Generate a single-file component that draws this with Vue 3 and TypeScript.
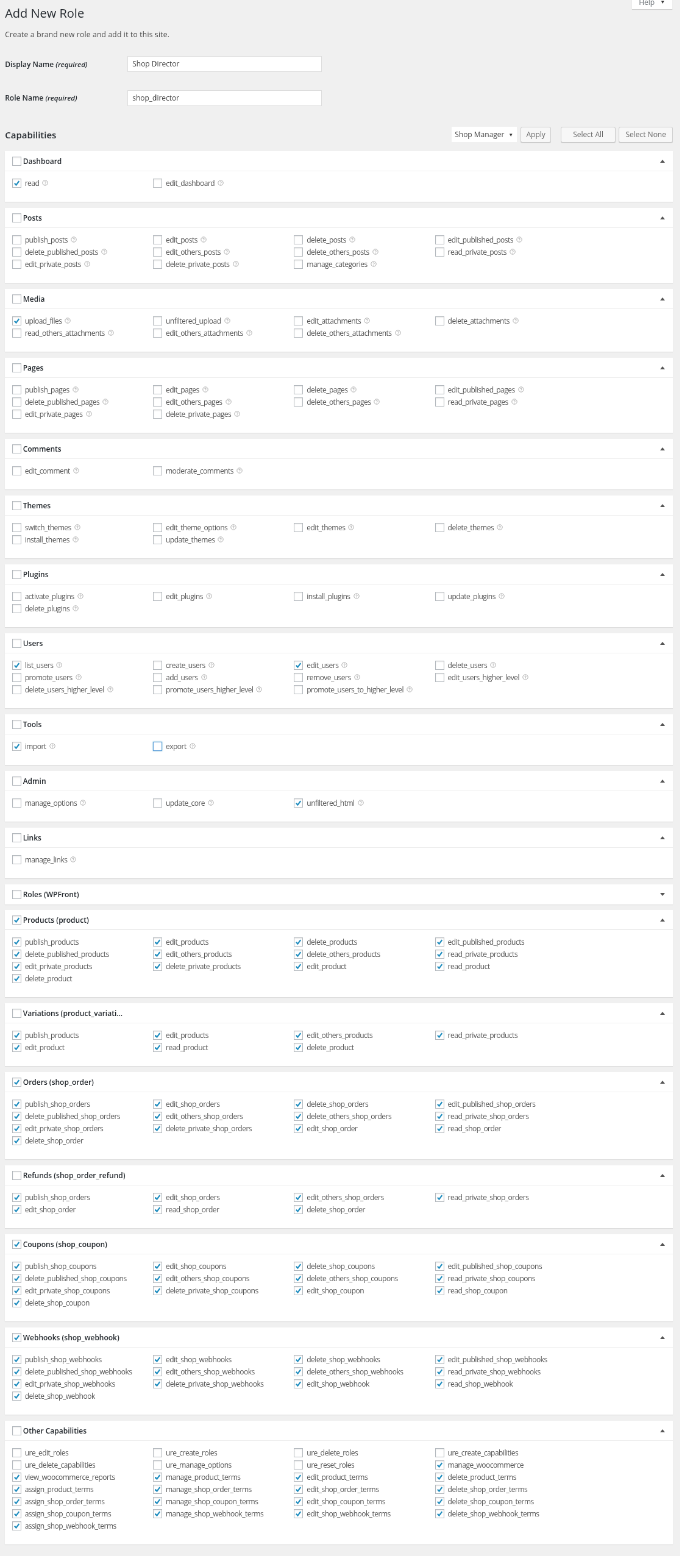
<script setup lang="ts">
interface Panel {
  title: string
  on?: boolean
  collapsed?: boolean
  help?: boolean
  caps: string[]
}

// a leading * marks a checked capability, a leading ! the focused box
const panels: Panel[] = [
  { title: 'Dashboard', help: true, caps: ['*read', 'edit_dashboard'] },
  { title: 'Posts', help: true, caps: ['publish_posts', 'edit_posts', 'delete_posts', 'edit_published_posts', 'delete_published_posts', 'edit_others_posts', 'delete_others_posts', 'read_private_posts', 'edit_private_posts', 'delete_private_posts', 'manage_categories'] },
  { title: 'Media', help: true, caps: ['*upload_files', 'unfiltered_upload', 'edit_attachments', 'delete_attachments', 'read_others_attachments', 'edit_others_attachments', 'delete_others_attachments'] },
  { title: 'Pages', help: true, caps: ['publish_pages', 'edit_pages', 'delete_pages', 'edit_published_pages', 'delete_published_pages', 'edit_others_pages', 'delete_others_pages', 'read_private_pages', 'edit_private_pages', 'delete_private_pages'] },
  { title: 'Comments', help: true, caps: ['edit_comment', 'moderate_comments'] },
  { title: 'Themes', help: true, caps: ['switch_themes', 'edit_theme_options', 'edit_themes', 'delete_themes', 'install_themes', 'update_themes'] },
  { title: 'Plugins', help: true, caps: ['activate_plugins', 'edit_plugins', 'install_plugins', 'update_plugins', 'delete_plugins'] },
  { title: 'Users', help: true, caps: ['*list_users', 'create_users', '*edit_users', 'delete_users', 'promote_users', 'add_users', 'remove_users', 'edit_users_higher_level', 'delete_users_higher_level', 'promote_users_higher_level', 'promote_users_to_higher_level'] },
  { title: 'Tools', help: true, caps: ['*import', '!export'] },
  { title: 'Admin', help: true, caps: ['manage_options', 'update_core', '*unfiltered_html'] },
  { title: 'Links', help: true, caps: ['manage_links'] },
  { title: 'Roles (WPFront)', collapsed: true, caps: [] },
  { title: 'Products (product)', on: true, caps: ['*publish_products', '*edit_products', '*delete_products', '*edit_published_products', '*delete_published_products', '*edit_others_products', '*delete_others_products', '*read_private_products', '*edit_private_products', '*delete_private_products', '*edit_product', '*read_product', '*delete_product'] },
  { title: 'Variations (product_variati...', caps: ['*publish_products', '*edit_products', '*edit_others_products', '*read_private_products', '*edit_product', '*read_product', '*delete_product'] },
  { title: 'Orders (shop_order)', on: true, caps: ['*publish_shop_orders', '*edit_shop_orders', '*delete_shop_orders', '*edit_published_shop_orders', '*delete_published_shop_orders', '*edit_others_shop_orders', '*delete_others_shop_orders', '*read_private_shop_orders', '*edit_private_shop_orders', '*delete_private_shop_orders', '*edit_shop_order', '*read_shop_order', '*delete_shop_order'] },
  { title: 'Refunds (shop_order_refund)', caps: ['*publish_shop_orders', '*edit_shop_orders', '*edit_others_shop_orders', '*read_private_shop_orders', '*edit_shop_order', '*read_shop_order', '*delete_shop_order'] },
  { title: 'Coupons (shop_coupon)', on: true, caps: ['*publish_shop_coupons', '*edit_shop_coupons', '*delete_shop_coupons', '*edit_published_shop_coupons', '*delete_published_shop_coupons', '*edit_others_shop_coupons', '*delete_others_shop_coupons', '*read_private_shop_coupons', '*edit_private_shop_coupons', '*delete_private_shop_coupons', '*edit_shop_coupon', '*read_shop_coupon', '*delete_shop_coupon'] },
  { title: 'Webhooks (shop_webhook)', on: true, caps: ['*publish_shop_webhooks', '*edit_shop_webhooks', '*delete_shop_webhooks', '*edit_published_shop_webhooks', '*delete_published_shop_webhooks', '*edit_others_shop_webhooks', '*delete_others_shop_webhooks', '*read_private_shop_webhooks', '*edit_private_shop_webhooks', '*delete_private_shop_webhooks', '*edit_shop_webhook', '*read_shop_webhook', '*delete_shop_webhook'] },
  { title: 'Other Capabilities', caps: ['ure_edit_roles', 'ure_create_roles', 'ure_delete_roles', 'ure_create_capabilities', 'ure_delete_capabilities', 'ure_manage_options', 'ure_reset_roles', '*manage_woocommerce', '*view_woocommerce_reports', '*manage_product_terms', '*edit_product_terms', '*delete_product_terms', '*assign_product_terms', '*manage_shop_order_terms', '*edit_shop_order_terms', '*delete_shop_order_terms', '*assign_shop_order_terms', '*manage_shop_coupon_terms', '*edit_shop_coupon_terms', '*delete_shop_coupon_terms', '*assign_shop_coupon_terms', '*manage_shop_webhook_terms', '*edit_shop_webhook_terms', '*delete_shop_webhook_terms', '*assign_shop_webhook_terms'] },
]

const capName = (c: string) => c.replace(/^[*!]/, '')
</script>

<template>
  <div class="stage">
    <div class="page">
      <div class="help-tab">Help <span class="tri">▼</span></div>
      <h1>Add New Role</h1>
      <p class="intro">Create a brand new role and add it to this site.</p>

      <div class="field first">
        <label>Display Name <em>(required)</em></label>
        <div class="input">Shop Director</div>
      </div>
      <div class="field second">
        <label>Role Name <em>(required)</em></label>
        <div class="input">shop_director</div>
      </div>

      <div class="cap-head">
        <h2>Capabilities</h2>
        <div class="select">Shop Manager<span class="tri">▼</span></div>
        <div class="btn apply">Apply</div>
        <div class="btn all">Select All</div>
        <div class="btn none">Select None</div>
      </div>

      <div class="panels">
        <section v-for="p in panels" :key="p.title" class="panel">
          <header>
            <span class="box">
              <svg v-if="p.on" viewBox="0 0 10 10"><path d="M2.2 5.2 4.2 7.4 7.9 2.4" /></svg>
            </span>
            <strong>{{ p.title }}</strong>
            <i class="arrow" :class="{ down: p.collapsed }"></i>
          </header>
          <div v-if="!p.collapsed" class="caps">
            <div v-for="c in p.caps" :key="c" class="cap">
              <span class="box" :class="{ focus: c[0] === '!' }">
                <svg v-if="c[0] === '*'" viewBox="0 0 10 10"><path d="M2.2 5.2 4.2 7.4 7.9 2.4" /></svg>
              </span>
              <span class="name">{{ capName(c) }}</span>
              <svg v-if="p.help" class="q" viewBox="0 0 10 10">
                <circle cx="5" cy="5" r="4.2" />
                <path d="M3.7 4C3.8 2.6 6.3 2.6 6.3 4.1 6.3 5.1 5 5 5 6.1M5 6.8V7.7" />
              </svg>
            </div>
          </div>
        </section>
      </div>
    </div>
  </div>
</template>

<style>
html, body {
  margin: 0;
  background: #f0f0f0;
}
</style>

<style scoped>
/* the reference is a wp-admin page shrunk to 61%, so build it full size and scale it */
.stage {
  width: 680px;
  height: 1556px;
  overflow: hidden;
}
.page {
  position: relative;
  width: 1115.7px;
  height: 2553px;
  padding: 0 11.5px 0 8.2px;
  box-sizing: border-box;
  transform: scale(0.6095);
  transform-origin: 0 0;
  will-change: transform;
  background: #f0f0f0;
  font-family: "Open Sans", "Noto Sans", sans-serif;
  color: #555;
}
.help-tab {
  position: absolute;
  top: -13px;
  right: 13px;
  width: 66px;
  height: 28px;
  box-sizing: border-box;
  padding-top: 8px;
  text-align: center;
  font-size: 12px;
  line-height: 16px;
  background: #fff;
  color: #72777c;
  box-shadow: 0 1px 1px rgba(0, 0, 0, 0.14);
}
.tri {
  font-size: 8px;
  margin-left: 6px;
  vertical-align: 2px;
  color: #333;
}
h1 {
  margin: 0;
  padding-top: 9px;
  font-size: 20px;
  line-height: 26px;
  font-weight: 400;
  color: #23282d;
}
.intro {
  margin: 11px 0 0;
  font-size: 12px;
  letter-spacing: 0.24px;
  line-height: 22px;
  color: #444;
}
.field {
  display: flex;
  align-items: center;
  height: 28px;
}
.field.first {
  margin-top: 23px;
}
.field.second {
  margin-top: 27.6px;
}
.field label {
  width: 201px;
  font-size: 12px;
  font-weight: 600;
  color: #23282d;
}
.field em {
  font-size: 11.5px;
}
.input {
  width: 319px;
  height: 26px;
  box-sizing: border-box;
  padding-left: 7px;
  border: 1px solid #ddd;
  background: #fff;
  font-size: 12px;
  line-height: 24px;
  color: #444;
}
.cap-head {
  display: flex;
  align-items: center;
  height: 28px;
  margin-top: 32.4px;
}
h2 {
  margin: 0;
  flex: 1;
  font-size: 15px;
  font-weight: 600;
  color: #23282d;
}
.select {
  display: flex;
  align-items: center;
  justify-content: space-between;
  width: 107px;
  height: 25px;
  box-sizing: border-box;
  padding: 0 6px 0 5px;
  background: #fff;
  font-size: 12px;
  color: #444;
  white-space: nowrap;
}
.btn {
  height: 26px;
  box-sizing: border-box;
  border: 1px solid #ccc;
  border-radius: 3px;
  background: #f7f7f7;
  box-shadow: 0 1px 0 #ccc;
  text-align: center;
  font-size: 12px;
  line-height: 24px;
  color: #666;
}
.apply {
  width: 50px;
  margin-left: 6px;
}
.all {
  width: 90px;
  margin-left: 16px;
}
.none {
  width: 89px;
  margin-left: 5px;
}
.panels {
  display: flex;
  flex-direction: column;
  gap: 9.3px;
  margin-top: 12.7px;
}
.panel {
  background: #fff;
  box-shadow: 0 1px 1px rgba(0, 0, 0, 0.08);
}
header {
  display: flex;
  align-items: center;
  height: 33px;
  box-sizing: border-box;
  padding: 0 12px 0 11.5px;
}
.panel header strong {
  margin-left: 3px;
  font-size: 12px;
  font-weight: 600;
  color: #23282d;
}
.caps {
  display: grid;
  grid-template-columns: repeat(4, 231.3px);
  grid-auto-rows: 20px;
  padding: 10px 0 20.7px 11.5px;
  border-top: 1px solid #eee;
  margin-top: -1px;
}
.cap {
  display: flex;
  align-items: center;
  min-width: 0;
}
.box {
  flex: none;
  width: 15px;
  height: 15px;
  box-sizing: border-box;
  border: 1px solid #b4b9be;
  background: #fff;
  box-shadow: inset 0 1px 2px rgba(0, 0, 0, 0.1);
}
.box.focus {
  border-color: #5b9dd9;
  box-shadow: 0 0 2px rgba(30, 140, 190, 0.8);
}
.box svg {
  display: block;
  width: 13px;
  height: 13px;
}
.box path {
  fill: none;
  stroke: #1e8cbe;
  stroke-width: 1.7;
}
.name {
  margin-left: 6px;
  font-size: 12px;
  letter-spacing: -0.5px;
  line-height: 20px;
  color: #555;
  white-space: nowrap;
}
.q {
  flex: none;
  width: 10px;
  height: 10px;
  margin-left: 5px;
  margin-top: -2px;
}
.q circle, .q path {
  fill: none;
  stroke: #999;
  stroke-width: 0.8;
}
.arrow {
  margin-left: auto;
  margin-right: 1px;
  width: 0;
  height: 0;
  border-left: 4px solid transparent;
  border-right: 4px solid transparent;
  border-bottom: 5px solid #555;
}
.arrow.down {
  border-bottom: 0;
  border-top: 5px solid #555;
}
</style>
